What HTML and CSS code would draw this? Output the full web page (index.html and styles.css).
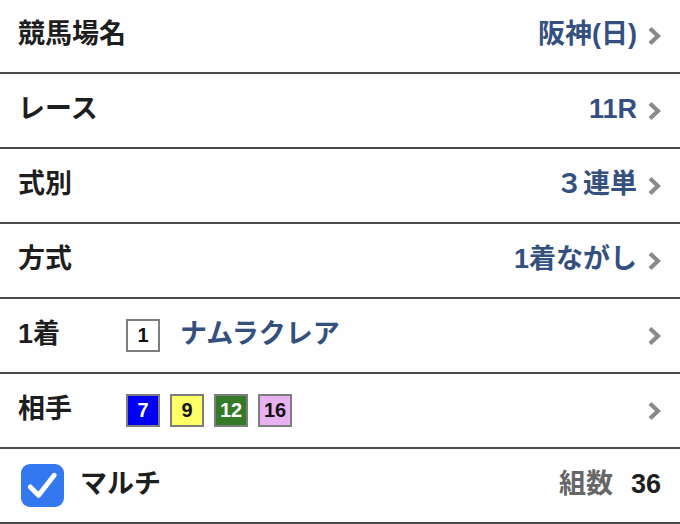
FILE: index.html
```html
<!DOCTYPE html>
<html lang="ja">
<head>
<meta charset="utf-8">
<link rel="stylesheet" href="styles.css">
</head>
<body>
<div class="list">
  <div class="row">
    <span class="label txt">競馬場名</span>
    <span class="value txt">阪神(日)</span>
    <svg class="chev" viewBox="0 0 14 20"><polyline points="3,2.5 11,10 3,17.5"/></svg>
  </div>
  <div class="row">
    <span class="label txt">レース</span>
    <span class="value txt">11R</span>
    <svg class="chev" viewBox="0 0 14 20"><polyline points="3,2.5 11,10 3,17.5"/></svg>
  </div>
  <div class="row">
    <span class="label txt">式別</span>
    <span class="value txt">３連単</span>
    <svg class="chev" viewBox="0 0 14 20"><polyline points="3,2.5 11,10 3,17.5"/></svg>
  </div>
  <div class="row">
    <span class="label txt">方式</span>
    <span class="value txt">1着ながし</span>
    <svg class="chev" viewBox="0 0 14 20"><polyline points="3,2.5 11,10 3,17.5"/></svg>
  </div>
  <div class="row">
    <span class="label fixed txt">1着</span>
    <span class="num white">1</span>
    <span class="horse txt">ナムラクレア</span>
    <svg class="chev" viewBox="0 0 14 20"><polyline points="3,2.5 11,10 3,17.5"/></svg>
  </div>
  <div class="row">
    <span class="label fixed txt">相手</span>
    <div class="nums">
      <span class="num blue">7</span>
      <span class="num yellow">9</span>
      <span class="num green">12</span>
      <span class="num pink">16</span>
    </div>
    <svg class="chev" viewBox="0 0 14 20"><polyline points="3,2.5 11,10 3,17.5"/></svg>
  </div>
  <div class="row last">
    <span class="check"><svg viewBox="0 0 44 44"><polyline points="9.5,23.5 18,32 34,11.5"/></svg></span>
    <span class="label multi txt">マルチ</span>
    <span class="count-label txt">組数</span>
    <span class="count txt">36</span>
  </div>
</div>
</body>
</html>
```
FILE: styles.css
```css
html, body {
  margin: 0;
  padding: 0;
  background: #fefefe;
}
body {
  font-family: "Liberation Sans", "Noto Sans CJK JP", sans-serif;
  font-weight: bold;
  color: #1e1e1e;
}
.list {
  display: flex;
  flex-direction: column;
  margin-top: -1px;
}
.row {
  display: flex;
  align-items: center;
  height: 73px;
  padding: 0 19px 0 18px;
  border-bottom: 2px solid #4a4a4a;
  box-sizing: content-box;
}
.txt {
  font-size: 27px;
  line-height: 1;
  padding-bottom: 3px;
}
.label {
  flex: 1;
}
.label.fixed {
  flex: 0 0 108px;
}
.value {
  color: #34507f;
}
.chev {
  width: 14px;
  height: 20px;
  margin-left: 10px;
  flex: none;
}
.chev polyline {
  fill: none;
  stroke: #8a8a8a;
  stroke-width: 4.2;
}
.num {
  box-sizing: border-box;
  width: 34px;
  height: 33px;
  border: 2px solid #7d7d7d;
  display: flex;
  align-items: center;
  justify-content: center;
  font-size: 20px;
  flex: none;
}
.nums {
  display: flex;
  gap: 10px;
  flex: 1;
}
.white { background: #fff; color: #111; }
.blue { background: #0000f5; color: #fff; }
.yellow { background: #ffff66; color: #111; }
.green { background: #347a28; color: #fff; }
.pink { background: #e8b2f0; color: #111; }
.horse {
  flex: 1;
  margin-left: 20px;
  color: #34507f;
}
.check {
  width: 43px;
  height: 43px;
  border-radius: 9px;
  background: #3478f0;
  margin-left: 3px;
  margin-right: 16px;
  display: flex;
  flex: none;
}
.check svg {
  width: 43px;
  height: 43px;
}
.check polyline {
  fill: none;
  stroke: #fff;
  stroke-width: 5;
  stroke-linecap: round;
  stroke-linejoin: round;
}
.count-label {
  color: #666;
}
.count {
  margin-left: 18px;
  color: #1e1e1e;
}
```
